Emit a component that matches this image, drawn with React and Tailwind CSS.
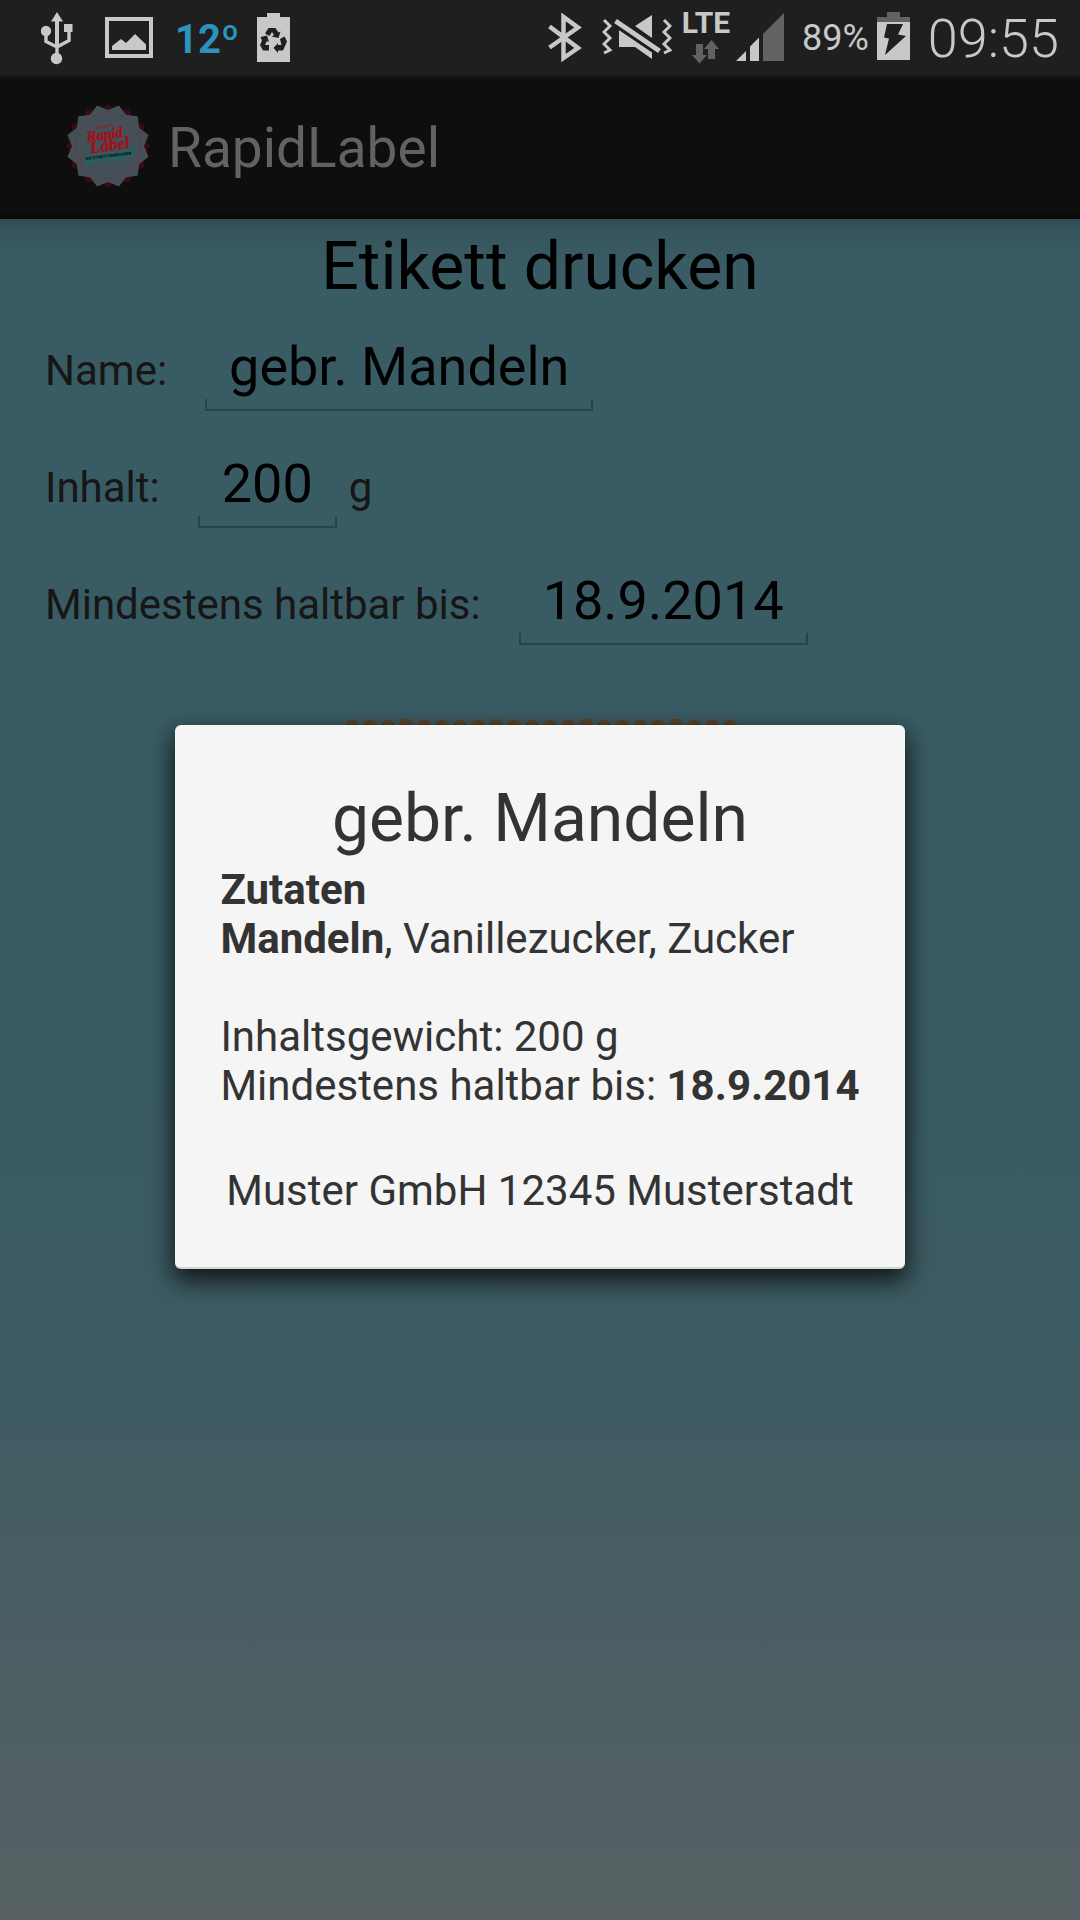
import React, { useState } from 'react';

const starPoints = (cx, cy, outer, inner, count, offset = 0) =>
  Array.from({ length: count * 2 }, (_, i) => {
    const r = i % 2 === 0 ? outer : inner;
    const a = ((i * 180) / count + offset - 90) * (Math.PI / 180);
    return `${(cx + r * Math.cos(a)).toFixed(1)},${(cy + r * Math.sin(a)).toFixed(1)}`;
  }).join(' ');

const UsbIcon = () => (
  <svg width="32" height="76" viewBox="41 0 32 76" fill="#c8c8c8" aria-label="USB">
    <path d="M57 12l6 9.500h-4V47h-4V21.500h-4z" />
    <circle cx="46" cy="31" r="5.200" />
    <rect x="64" y="24" width="8.500" height="8" />
    <circle cx="56.500" cy="58.500" r="5.700" />
    <path d="M46 34v7.500l11 5.500v8M69 31v9.500L57 47" fill="none" stroke="#c8c8c8" strokeWidth="3.400" />
  </svg>
);

const PictureIcon = () => (
  <svg width="48" height="76" viewBox="105 0 48 76" aria-label="Screenshot">
    <rect x="107" y="19" width="44" height="37" fill="none" stroke="#c8c8c8" strokeWidth="4" />
    <path d="M112 50v-4l9-7 5 4 9-9 11 10.500V50z" fill="#c8c8c8" />
  </svg>
);

const RecycleBatteryIcon = () => (
  <svg width="33" height="76" viewBox="257 0 33 76" aria-label="Energiesparen">
    <path d="M257 17h10v-4h13v4h10v45h-33z" fill="#c8c8c8" />
    <g fill="#1f1f1f">
      <path d="M268.500 28h7l3 4.500 2-1-2 6.500-7-1.500 2.500-1.500-2-3-2.500 4-4.500-2.500z" />
      <path d="M260.500 37l6.500-1.500 2 6.500-2-1-2 4h4v5.500h-6l-3-5.500 2-4.500z" />
      <path d="M280 39l4.500-2.500 2.500 5-4 9h-5v2.500l-4.500-5 4.500-5v2h3.500z" />
    </g>
  </svg>
);

const BluetoothIcon = () => (
  <svg width="34" height="76" viewBox="549 0 34 76" fill="none" stroke="#c8c8c8" strokeWidth="4.500" aria-label="Bluetooth">
    <path d="M550.500 26.500L579 48 564.500 58V17L579 27.500 550.500 47.500" />
  </svg>
);

const MutedVibrateIcon = () => (
  <svg width="70" height="76" viewBox="602 0 70 76" aria-label="Vibration">
    <path d="M604 20l6 6-6 6 6 6-6 6 6 6-6 3M664 20l6 6-6 6 6 6-6 6 6 6-6 3" fill="none" stroke="#c8c8c8" strokeWidth="3" />
    <path d="M652 15v23l-17-12zM619 30l33 22v7l-17-12h-16z" fill="#c8c8c8" />
    <path d="M615 21l44 30" stroke="#1f1f1f" strokeWidth="10" />
    <path d="M615.500 21l44 30" stroke="#c8c8c8" strokeWidth="5" />
  </svg>
);

const DataArrows = () => (
  <svg width="28" height="24" viewBox="694 40 28 24" fill="#626262" aria-label="Daten">
    <path d="M698 44h7v11h4l-7.500 8.500L694 55h4zM710 59h7V49h4l-7.500-9-7.500 9h4z" />
  </svg>
);

const SignalIcon = () => (
  <svg width="48" height="76" viewBox="736 0 48 76" aria-label="Signal">
    <path d="M736 61l10-10v10zM750 61V46.500l9-9V61z" fill="#c8c8c8" />
    <path d="M763 61V34l21-21v48z" fill="#626262" />
  </svg>
);

const ChargingIcon = () => (
  <svg width="33" height="76" viewBox="877 0 33 76" aria-label="Akku wird geladen">
    <path d="M877 17h10v-5h13v5h10v5h-33z" fill="#626262" />
    <path d="M877 22h33v38h-33z" fill="#c8c8c8" />
    <path d="M887 24h16l-5 10.500 8 1.500-21 19 4-16.500-5-1z" fill="#1f1f1f" />
  </svg>
);

const Logo = () => (
  <svg width="86" height="86" viewBox="0 0 86 86" aria-label="RapidLabel Logo">
    <polygon points={starPoints(43, 43, 42, 36, 12)} fill="#390c14" />
    <polygon points={starPoints(43, 43, 42, 36, 12, 15)} fill="#454f57" />
    <circle cx="43" cy="43" r="32.500" fill="none" stroke="#5d3f49" strokeWidth="0.800" />
    <path d="M20 51c12-3 31 0 49-10v12c-17 9-35 2-49 10z" fill="#2b5d61" />
    <g transform="rotate(-8 43 43)" fontFamily="'Liberation Serif', serif" fontStyle="italic" fontWeight="700" fill="#a3101a">
      <text x="23" y="36" fontSize="15" stroke="#a3101a" strokeWidth="0.400">Rapid</text>
      <text x="25" y="48" fontSize="17" stroke="#a3101a" strokeWidth="0.400">Label</text>
      <text x="34" y="24" fontSize="4">this app is</text>
    </g>
    <text x="21" y="57" fontSize="4" fontWeight="900" fontFamily="Roboto, sans-serif" fill="#0b1415" transform="rotate(-7 21 57)">
      DIE ETIKETTENDRUCKER
    </text>
  </svg>
);

const Biscuit = () => (
  <svg className="mx-auto mt-[72px] block" width="394" height="200" viewBox="0 0 394 200" aria-hidden="true">
    <g fill="#54452c" stroke="#5d5550">
      {Array.from({ length: 22 }, (_, i) => (
        <ellipse key={i} cx={9 + i * 18} cy={i % 5 === 3 ? 9 : 10} rx="8" ry="8" />
      ))}
    </g>
    <rect x="4" y="10" width="386" height="180" rx="6" fill="#54452c" />
  </svg>
);

const Field = ({ id, label, value, onChange, unit }) => (
  <div className="flex h-[117px] items-baseline pt-10">
    <label htmlFor={id} className="mr-[38px] text-[42px] text-[#161616]">
      {label}
    </label>
    <div className="flex flex-col">
      <input
        id={id}
        value={value}
        onChange={(e) => onChange(e.target.value)}
        className="field-sizing-content h-[77px] px-6 pb-[13px] text-[54px] leading-[64px] text-black outline-none"
      />
      <span className="-mt-3 h-3 border-2 border-t-0 border-[#2a434a]" />
    </div>
    {unit && <span className="ml-3 text-[42px] text-[#161616]">{unit}</span>}
  </div>
);

const StatusBar = () => (
  <div className="flex h-[78px] items-start justify-between border-b-3 border-[#161616] bg-[#1f1f1f] pr-[21px] pl-[41px] text-[#c8c8c8]">
    <div className="flex h-[76px] items-center">
      <UsbIcon />
      <span className="w-8" />
      <PictureIcon />
      <span className="ml-[22px] w-[52px] pt-1 font-[Roboto,sans-serif] text-[40px] font-bold text-[#2b93bd]">
        12º
      </span>
      <span className="w-[30px]" />
      <RecycleBatteryIcon />
    </div>
    <div className="flex h-[76px] items-center">
      <BluetoothIcon />
      <span className="w-5" />
      <MutedVibrateIcon />
      <div className="ml-2 flex w-[52px] flex-col items-center pb-1">
        <span className="pb-0.5 text-[30px] leading-[30px] font-bold">LTE</span>
        <DataArrows />
      </div>
      <span className="w-1" />
      <SignalIcon />
      <span className="ml-[18px] text-[36px]">89%</span>
      <span className="w-2" />
      <ChargingIcon />
      <span className="ml-[18px] text-[54px] font-light">09:55</span>
    </div>
  </div>
);

const App = () => {
  const [name, setName] = useState('gebr. Mandeln');
  const [weight, setWeight] = useState('200');
  const [date, setDate] = useState('18.9.2014');

  return (
    <div className="relative flex min-h-screen flex-col overflow-hidden bg-[#0e0e0e] font-[Roboto,sans-serif]">
      <StatusBar />
      <header className="flex h-[141px] items-center border-b-6 border-[#0a0a0a] pl-[65px]">
        <Logo />
        <span className="ml-[17px] pt-1.5 text-[55px] text-[#626262]">RapidLabel</span>
      </header>

      <main className="flex-1 bg-[linear-gradient(#2f4d55,#36555d_12px,#395b63_40px,#395b63_50%,#3f5c62_70%,#4d5e63_86%,#576163)] px-[45px]">
        <h1 className="pt-5 text-center text-[66px] leading-[55px] text-black">Etikett drucken</h1>
        <Field id="name" label="Name:" value={name} onChange={setName} />
        <Field id="weight" label="Inhalt:" value={weight} onChange={setWeight} unit="g" />
        <Field id="date" label="Mindestens haltbar bis:" value={date} onChange={setDate} />
        <Biscuit />
      </main>

      {/* label preview */}
      <div className="absolute inset-x-0 top-[73px] bottom-0 flex items-center justify-center">
        <div
          role="dialog"
          aria-labelledby="preview-title"
          className="rounded-md border-b-2 border-[#d5d5d5] bg-[#f5f5f5] px-[45px] pt-[55px] pb-[52px] text-[42px] leading-[49px] text-[#333] shadow-[0_10px_24px_2px_rgba(0,0,0,0.75)]"
        >
          <h2 id="preview-title" className="mb-[7px] text-center text-[66px] leading-[78px]">
            {name}
          </h2>
          <p className="font-bold">Zutaten</p>
          <p>
            <b>Mandeln</b>, Vanillezucker, Zucker
          </p>
          <p className="mt-[49px]">Inhaltsgewicht: {weight} g</p>
          <p>
            Mindestens haltbar bis: <b>{date}</b>
          </p>
          <p className="mt-14 text-center">Muster GmbH 12345 Musterstadt</p>
        </div>
      </div>
    </div>
  );
};

export default App;
